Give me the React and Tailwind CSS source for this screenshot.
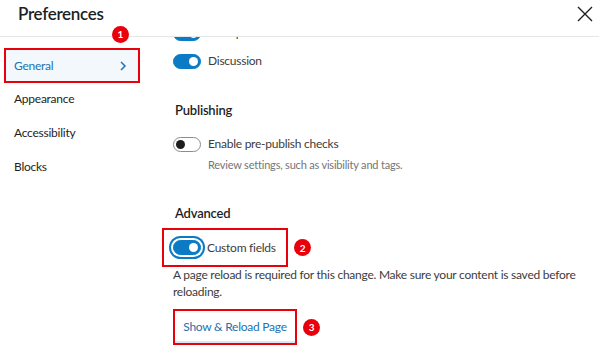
import React from "react";

function Toggle({ on, focus }) {
  return (
    <span className={"relative inline-flex shrink-0 items-center rounded-full " + (focus ? "p-[2px] ring-2 ring-[#0a7bc4] ring-offset-0" : "")}>
      <span
        className={
          "relative block h-[15px] w-[28px] rounded-full border " +
          (on ? "bg-[#0a7bc4] border-[#0a7bc4]" : "bg-white border-[#8c8c8c]")
        }
      >
        <span
          className={
            "absolute top-[2px] block h-[9px] w-[9px] rounded-full " +
            (on ? "right-[2px] bg-white" : "left-[2px] bg-[#1e1e1e]")
          }
        />
      </span>
    </span>
  );
}

function Badge({ n }) {
  return (
    <span className="inline-flex h-[17px] w-[17px] shrink-0 items-center justify-center rounded-full bg-[#e8000b] text-[10px] font-bold leading-none text-white">
      {n}
    </span>
  );
}

export default function App() {
  return (
    <div
      className="flex h-[347px] w-[599px] flex-col overflow-hidden bg-white text-[#1e1e1e]"
      style={{ fontFamily: "Lato, 'Noto Sans', sans-serif" }}
    >
      <div className="relative flex h-[37px] shrink-0 items-start justify-between border-b border-[#e6e6e6] pl-[18px] pr-[2px]">
        <h1 className="pt-[5px] text-[17px] font-semibold leading-[18px] tracking-[-0.3px]">Preferences</h1>
        <svg width="24" height="24" viewBox="0 0 24 24" className="mt-[2px] text-[#1e1e1e]">
          <path d="M5 5L19 19M19 5L5 19" stroke="currentColor" strokeWidth="1.4" fill="none" />
        </svg>
        <span className="absolute left-[112px] top-[20px] z-10">
          <Badge n="1" />
        </span>
      </div>
      <div className="flex min-h-0 flex-1">
        <nav className="w-[150px] shrink-0 pl-[4px] pt-[11px] text-[12px] tracking-[-0.25px]">
          <div className="flex h-[35px] w-[136px] items-center justify-between border-2 border-[#e8000b] bg-[#f2f8fc] pl-[8px] pr-[10px] text-[#2271b1]">
            <span>General</span>
            <svg width="10" height="12" viewBox="0 0 10 12">
              <path d="M3 2L7 6L3 10" stroke="#2271b1" strokeWidth="1.5" fill="none" />
            </svg>
          </div>
          <div className="-mt-[1px] flex flex-col pl-[10px] text-[#1e1e1e]">
            <span className="flex h-[34px] items-center">Appearance</span>
            <span className="flex h-[34px] items-center">Accessibility</span>
            <span className="flex h-[34px] items-center">Blocks</span>
          </div>
        </nav>
        <div className="relative min-h-0 flex-1 overflow-hidden">
          <div className="-mt-[12px] flex flex-col pl-[23px] text-[12px] tracking-[-0.25px]">
            <div className="flex h-[16px] items-center gap-[7px]">
              <Toggle on />
              <span className="text-[#3c3c3c]">Excerpt</span>
            </div>
            <div className="mt-[12px] flex h-[16px] items-center gap-[7px] text-[#3c3c3c]">
              <Toggle on />
              <span>Discussion</span>
            </div>
            <h2 className="mt-[33px] pl-[2px] text-[13px] font-semibold leading-[16px] tracking-[-0.2px]">Publishing</h2>
            <div className="mt-[18px] flex h-[16px] items-center gap-[7px] text-[#3c3c3c]">
              <Toggle />
              <span>Enable pre-publish checks</span>
            </div>
            <p className="mt-[5px] pl-[35px] text-[11px] leading-[16px] tracking-[-0.2px] text-[#757575]">
              Review settings, such as visibility and tags.
            </p>
            <h2 className="mt-[32px] pl-[2px] text-[13px] font-semibold leading-[16px] tracking-[-0.2px]">Advanced</h2>
            <div className="mt-[7px] flex items-center gap-[6px]">
              <div className="-ml-[11px] flex h-[39px] w-[126px] items-center gap-[4px] border-2 border-[#e8000b] pl-[7px] text-[#3c3c3c]">
                <Toggle on focus />
                <span>Custom fields</span>
              </div>
              <Badge n="2" />
            </div>
            <p className="-mt-[1px] w-[410px] text-[12px] leading-[17px] text-[#3c3c3c]">
              A page reload is required for this change. Make sure your content is saved before reloading.
            </p>
            <div className="mt-[9px] flex items-center gap-[6px]">
              <button className="flex h-[36px] w-[124px] items-center justify-center border-2 border-[#e8000b] text-[12px] tracking-[-0.25px] text-[#2271b1] shadow-[inset_0_-2px_0_#dbe7f0]">
                Show &amp; Reload Page
              </button>
              <Badge n="3" />
            </div>
          </div>
        </div>
      </div>
    </div>
  );
}
